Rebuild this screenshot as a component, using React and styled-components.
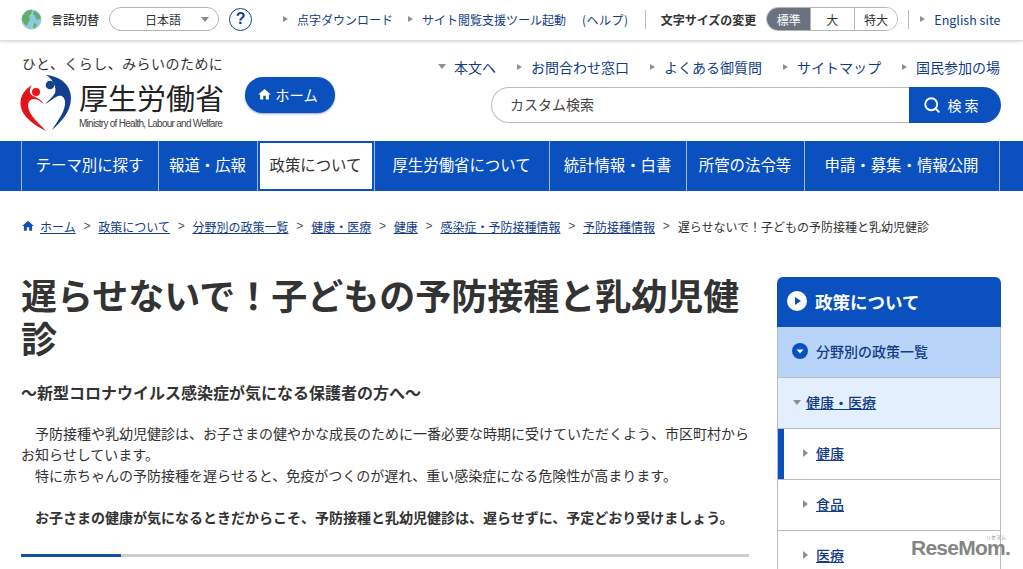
import React from 'react';
import styled, { createGlobalStyle } from 'styled-components';
import { FiSearch } from 'react-icons/fi';
import { MdHome } from 'react-icons/md';

const GlobalStyle = createGlobalStyle`
  html, body {
    margin: 0;
    padding: 0;
    background: #fff;
    overflow: hidden;
  }
  body {
    font-family: "Noto Sans CJK JP", "Noto Sans", sans-serif;
    color: #333;
  }
  * { box-sizing: border-box; }
  a { color: #133c88; text-decoration: none; }
  svg { flex: none; }
`;

const Page = styled.div`
  width: 1023px;
  height: 569px;
  overflow: hidden;
  position: relative;
`;

// --- Top utility bar
const TopBar = styled.div`
  height: 41px;
  display: flex;
  align-items: center;
  padding: 0 0 2px 21px;
  border-bottom: 1px solid #ddd;
  box-shadow: 0 1px 3px rgba(0, 0, 0, .14);
  font-size: 12px;
`;

const LangLabel = styled.span`
  margin-left: 9px;
  font-weight: 500;
  color: #333;
`;

const LangSelect = styled.div`
  width: 110px;
  height: 24px;
  margin-left: 10px;
  border: 1px solid #b5b5b5;
  border-radius: 12px;
  display: flex;
  align-items: center;
  justify-content: center;
  padding-right: 2px;
  position: relative;
  &::after {
    content: '';
    position: absolute;
    right: 9px;
    top: 9px;
    border: 4px solid transparent;
    border-top: 5px solid #8a8a8a;
  }
`;

const Help = styled.div`
  width: 23px;
  height: 23px;
  margin-left: 10px;
  border: 1px solid #0f3f95;
  border-radius: 50%;
  color: #0f3f95;
  font-weight: 700;
  font-size: 16px;
  font-family: "Liberation Sans", sans-serif;
  display: flex;
  align-items: center;
  justify-content: center;
`;

const TopLink = styled.a`
  color: #133c88;
  white-space: nowrap;
  margin-left: ${p => p.$gap || 0}px;
  font-size: ${p => p.$size || 12}px;
  letter-spacing: ${p => p.$spacing || 0}px;
  display: flex;
  align-items: center;
  &::before {
    content: '';
    display: ${p => (p.$plain ? 'none' : 'block')};
    border: 3.5px solid transparent;
    border-left: 5px solid #8f8f8f;
    border-right: 0;
    margin-right: ${p => p.$arrowGap || 9}px;
  }
`;

const Divider = styled.div`
  width: 1px;
  height: 19px;
  background: #bbb;
  margin-left: ${p => p.$left}px;
`;

const SizeLabel = styled.span`
  margin-left: 15px;
  font-weight: 700;
  color: #333;
`;

const SizeGroup = styled.div`
  display: flex;
  width: 132px;
  height: 24px;
  margin-left: 10px;
  border: 1px solid #b5b5b5;
  border-radius: 12px;
  overflow: hidden;
`;

const SizeButton = styled.div`
  flex: 1;
  display: flex;
  align-items: center;
  justify-content: center;
  background: ${p => (p.$active ? '#6a7280' : '#fff')};
  color: ${p => (p.$active ? '#fff' : '#333')};
  & + & { border-left: 1px solid #b5b5b5; }
`;

// --- Masthead
const Masthead = styled.header`
  height: 100px;
  display: flex;
  justify-content: space-between;
  padding: 0 22px 0 20px;
`;

const LogoArea = styled.div`
  display: flex;
  align-items: flex-start;
`;

const LogoBlock = styled.div`
  width: 205px;
`;

const Tagline = styled.div`
  font-size: 14px;
  line-height: 20px;
  margin: 12px 0 0 2px;
  letter-spacing: .45px;
  color: #333;
  white-space: nowrap;
`;

const LogoRow = styled.div`
  display: flex;
  margin-top: 1px;
`;

const LogoText = styled.div`
  margin-left: 7px;
`;

const LogoTitle = styled.div`
  font-size: 29px;
  line-height: 36px;
  margin-top: 5px;
  color: #222;
  white-space: nowrap;
`;

const LogoSub = styled.div`
  font-family: "Liberation Sans", sans-serif;
  font-size: 10px;
  line-height: 12px;
  margin-top: 3px;
  letter-spacing: -.72px;
  color: #444;
  white-space: nowrap;
`;

const HomeButton = styled.a`
  width: 90px;
  height: 36px;
  margin: 36px 0 0 20px;
  border-radius: 18px;
  background: #0a50bf;
  box-shadow: 0 1px 2px rgba(10, 60, 150, .45);
  color: #fff;
  font-size: 14.3px;
  display: flex;
  align-items: center;
  justify-content: center;
  gap: 3px;
  padding: 0 5px 2px 0;
`;

const RightArea = styled.div`
  width: 510px;
  display: flex;
  flex-direction: column;
  align-items: flex-end;
`;

const HeadLinks = styled.nav`
  height: 46px;
  display: flex;
  align-items: center;
  padding: 5px 1px 0 0;
`;

const SearchBox = styled.div`
  width: 510px;
  height: 36px;
  display: flex;
`;

const SearchInput = styled.div`
  flex: 1;
  border: 1px solid #bbb;
  border-right: 0;
  border-radius: 18px 0 0 18px;
  font-size: 14px;
  padding: 0 0 2px 18px;
  display: flex;
  align-items: center;
  color: #444;
`;

const SearchButton = styled.div`
  width: 92px;
  background: #0a50bf;
  border-radius: 0 18px 18px 0;
  color: #fff;
  font-size: 14px;
  letter-spacing: 3px;
  display: flex;
  align-items: center;
  justify-content: center;
  gap: 7px;
  padding: 0 6px 1px 0;
`;

// --- Global nav
const GlobalNav = styled.nav`
  height: 50px;
  background: #0a50bf;
  display: flex;
  padding-left: 21px;
`;

const NavItem = styled.a`
  width: ${p => p.$w}px;
  flex: none;
  border-left: 1px solid #9db9e4;
  display: flex;
  align-items: center;
  justify-content: center;
  font-size: 15.4px;
  white-space: nowrap;
  color: ${p => (p.$active ? '#333' : '#fff')};
  background: ${p => (p.$active ? '#fff' : 'transparent')};
  box-shadow: ${p => (p.$active ? 'inset 0 0 0 2px #0a50bf' : 'none')};
  padding: 0 1px 4px 0;
  &:last-child { border-right: 1px solid #9db9e4; }
`;

// --- Breadcrumb
const Crumbs = styled.div`
  height: 72px;
  padding: 27px 0 0 21px;
  display: flex;
  align-items: flex-start;
  font-size: 12px;
  line-height: 17px;
  white-space: nowrap;
`;

const CrumbHome = styled(MdHome)`
  margin: 1px 5px 0 0;
  color: #0a50bf;
`;

const CrumbLink = styled.a`
  color: #133c88;
  text-decoration: underline;
`;

const CrumbSep = styled.span`
  margin: 0 7.8px;
  color: #555;
  font-family: "Liberation Sans", sans-serif;
`;

// --- Content
const Columns = styled.div`
  display: flex;
  align-items: flex-start;
  padding: 0 22px 0 21px;
`;

const Main = styled.main`
  width: 728px;
`;

const Title = styled.h1`
  margin: 0;
  font-size: 36px;
  line-height: 43px;
  font-weight: 700;
  color: #333;
  padding-top: 10px;
`;

const Lead = styled.h2`
  margin: 21px 0 0;
  font-size: 16px;
  line-height: 24px;
  font-weight: 700;
  color: #333;
`;

const Para = styled.p`
  margin: ${p => p.$top || 0}px 0 0;
  font-size: 14px;
  line-height: 21px;
  font-weight: ${p => (p.$bold ? 700 : 400)};
  text-indent: 14px;
  color: #333;
`;

const Progress = styled.div`
  height: 3px;
  margin-top: 26px;
  background: #ccc;
  &::before {
    content: '';
    display: block;
    width: 100px;
    height: 3px;
    background: #1450a8;
  }
`;

// --- Side menu
const Side = styled.aside`
  width: 224px;
  margin-left: 28px;
  margin-top: 14px;
  flex: none;
`;

const SideHead = styled.div`
  height: 50px;
  background: #0a50bf;
  border-radius: 6px 6px 0 0;
  color: #fff;
  font-size: 17.5px;
  font-weight: 700;
  display: flex;
  align-items: center;
  padding: 0 0 2px 10px;
  gap: 8px;
`;

const SideRow = styled.div`
  height: 51px;
  display: flex;
  align-items: center;
  background: ${p => p.$bg || '#fff'};
  border: 1px solid #bbb;
  border-top: 0;
  padding-left: ${p => p.$pad}px;
  padding-bottom: 2px;
  font-size: 14px;
  font-weight: 500;
  position: relative;
  ${p => p.$current && `
    &::before {
      content: '';
      position: absolute;
      left: 0;
      top: 0;
      bottom: 0;
      width: 6px;
      background: #0a50bf;
    }
  `}
`;

const SideLink = styled.a`
  color: #133c88;
  text-decoration: ${p => (p.$plain ? 'none' : 'underline')};
`;

const RightTri = styled.span`
  border: 4px solid transparent;
  border-left: 5px solid #8f8f8f;
  border-right: 0;
  margin-right: 8px;
`;

const DownTri = styled.span`
  border: 4px solid transparent;
  border-top: 5px solid #8f8f8f;
  border-bottom: 0;
  margin-right: 5px;
`;

const HeadDownTri = styled(DownTri)`
  margin-right: 8px;
`;

const Watermark = styled.div`
  position: absolute;
  right: 13px;
  bottom: 14px;
  font-family: "Liberation Sans", sans-serif;
  font-size: 21px;
  line-height: 15px;
  font-weight: 700;
  letter-spacing: -.75px;
  color: #858585;
`;

const WatermarkRuby = styled.span`
  position: absolute;
  right: 4px;
  top: -6px;
  font-family: "Noto Sans CJK JP", sans-serif;
  font-size: 5px;
  line-height: 6px;
  font-weight: 400;
  letter-spacing: 0;
`;

const Globe = () => (
  <svg width="21" height="21" viewBox="0 0 21 21">
    <circle cx="10.5" cy="10.5" r="10" fill="#8ec9dc" />
    <path d="M4 3.5C6 1.5 9 .5 11 1l-1 4 -2 2 1 4 -2 3 -1 3C3 15 .5 12 1 9c.4-2 1.500-4 3-5.500z" fill="#62ad6a" />
    <path d="M13 2c3 .8 6 3.500 7 7l-3 2 -2-1 -1-3 -2-2z" fill="#62ad6a" />
    <path d="M13 14l3 1-2 4-2-1z" fill="#62ad6a" />
  </svg>
);

const LogoMark = () => (
  <svg width="52" height="58" viewBox="0 0 52 58">
    <circle cx="30" cy="11" r="4.300" fill="#133f8f" />
    <path d="M26 1C40 2 51 11 51 24 51 38 41 48 32 56 38 46 46 37 45 27 44 22 41 21 38 22 33 24 30 28 25 30 29 26 33 23 35 19 37 14 33 5 26 1z" fill="#133f8f" />
    <circle cx="16" cy="18" r="4" fill="#e5141a" />
    <path d="M12 11C5 15 0 22 .5 30 1 42 14 51 26 57 20 50 9 42 8 32 8 28 10 25 14 25 18 25 21 28 24 30 21 26 18 24 13 22 9 20 9 15 12 11z" fill="#e5141a" />
  </svg>
);

const PlayBadge = () => (
  <svg width="20" height="20" viewBox="0 0 20 20">
    <circle cx="10" cy="10" r="10" fill="#fff" />
    <path d="M8 6l6 4-6 4z" fill="#0a50bf" />
  </svg>
);

const DownBadgeIcon = styled.svg`
  margin-right: 8px;
`;

const DownBadge = () => (
  <DownBadgeIcon width="16" height="16" viewBox="0 0 16 16">
    <circle cx="8" cy="8" r="8" fill="#0a50bf" />
    <path d="M4.500 6.500h7L8 10.500z" fill="#fff" />
  </DownBadgeIcon>
);

const navItems = [
  ['テーマ別に探す', 137],
  ['報道・広報', 99],
  ['政策について', 117],
  ['厚生労働省について', 175],
  ['統計情報・白書', 137],
  ['所管の法令等', 118],
  ['申請・募集・情報公開', 196]
];

const crumbs = ['政策について', '分野別の政策一覧', '健康・医療', '健康', '感染症・予防接種情報', '予防接種情報'];

const App = () => (
  <Page>
    <GlobalStyle />
    <TopBar>
      <Globe />
      <LangLabel>言語切替</LangLabel>
      <LangSelect>日本語</LangSelect>
      <Help>?</Help>
      <TopLink href="#" $gap={31}>点字ダウンロード</TopLink>
      <TopLink href="#" $gap={15}>サイト閲覧支援ツール起動</TopLink>
      <TopLink href="#" $gap={16} $plain $spacing={.5}>(ヘルプ)</TopLink>
      <Divider $left={16} />
      <SizeLabel>文字サイズの変更</SizeLabel>
      <SizeGroup>
        <SizeButton $active>標準</SizeButton>
        <SizeButton>大</SizeButton>
        <SizeButton>特大</SizeButton>
      </SizeGroup>
      <Divider $left={10} />
      <TopLink href="#" $gap={11} $size={12.5}>English site</TopLink>
    </TopBar>

    <Masthead>
      <LogoArea>
        <LogoBlock>
          <Tagline>ひと、くらし、みらいのために</Tagline>
          <LogoRow>
            <LogoMark />
            <LogoText>
              <LogoTitle>厚生労働省</LogoTitle>
              <LogoSub>Ministry of Health, Labour and Welfare</LogoSub>
            </LogoText>
          </LogoRow>
        </LogoBlock>
        <HomeButton href="#"><MdHome size={15} />ホーム</HomeButton>
      </LogoArea>
      <RightArea>
        <HeadLinks>
          <TopLink href="#" $size={14} $plain><HeadDownTri />本文へ</TopLink>
          <TopLink href="#" $size={14} $gap={21}>お問合わせ窓口</TopLink>
          <TopLink href="#" $size={14} $gap={21}>よくある御質問</TopLink>
          <TopLink href="#" $size={14} $gap={21}>サイトマップ</TopLink>
          <TopLink href="#" $size={14} $gap={21}>国民参加の場</TopLink>
        </HeadLinks>
        <SearchBox>
          <SearchInput>カスタム検索</SearchInput>
          <SearchButton><FiSearch size={18} strokeWidth={2.5} />検索</SearchButton>
        </SearchBox>
      </RightArea>
    </Masthead>

    <GlobalNav>
      {navItems.map(([label, w], i) => (
        <NavItem key={label} href="#" $w={w} $active={i === 2}>{label}</NavItem>
      ))}
    </GlobalNav>

    <Crumbs>
      <CrumbHome size={14} />
      <CrumbLink href="#">ホーム</CrumbLink>
      {crumbs.map(c => (
        <React.Fragment key={c}>
          <CrumbSep>&gt;</CrumbSep>
          <CrumbLink href="#">{c}</CrumbLink>
        </React.Fragment>
      ))}
      <CrumbSep>&gt;</CrumbSep>
      <span>遅らせないで！子どもの予防接種と乳幼児健診</span>
    </Crumbs>

    <Columns>
      <Main>
        <Title>遅らせないで！子どもの予防接種と乳幼児健診</Title>
        <Lead>〜新型コロナウイルス感染症が気になる保護者の方へ〜</Lead>
        <Para $top={19}>予防接種や乳幼児健診は、お子さまの健やかな成長のために一番必要な時期に受けていただくよう、市区町村からお知らせしています。</Para>
        <Para>特に赤ちゃんの予防接種を遅らせると、免疫がつくのが遅れ、重い感染症になる危険性が高まります。</Para>
        <Para $top={21} $bold>お子さまの健康が気になるときだからこそ、予防接種と乳幼児健診は、遅らせずに、予定どおり受けましょう。</Para>
        <Progress />
      </Main>
      <Side>
        <SideHead><PlayBadge />政策について</SideHead>
        <SideRow $bg="#b9d4f9" $pad={14}><DownBadge /><SideLink $plain href="#">分野別の政策一覧</SideLink></SideRow>
        <SideRow $bg="#e3effd" $pad={15}><DownTri /><SideLink href="#">健康・医療</SideLink></SideRow>
        <SideRow $pad={25} $current><RightTri /><SideLink href="#">健康</SideLink></SideRow>
        <SideRow $pad={25}><RightTri /><SideLink href="#">食品</SideLink></SideRow>
        <SideRow $pad={25}><RightTri /><SideLink href="#">医療</SideLink></SideRow>
      </Side>
    </Columns>
    <Watermark>ReseMom.<WatermarkRuby>リセマム</WatermarkRuby></Watermark>
  </Page>
);

export default App;
